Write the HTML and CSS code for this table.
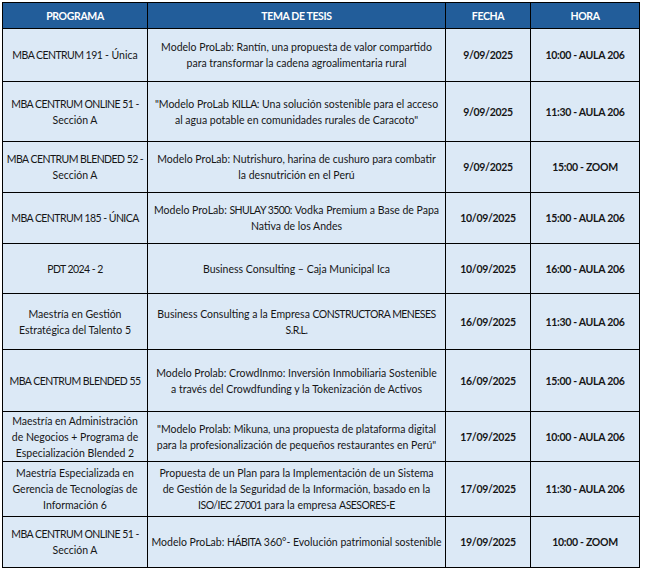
FILE: index.html
```html
<!DOCTYPE html>
<html lang="es">
<head>
<meta charset="utf-8">
<title>Sustentaciones de tesis</title>
<link rel="stylesheet" href="styles.css">
</head>
<body>
<div class="grid">
  <div class="cell head"><p>PROGRAMA</p></div>
  <div class="cell head"><p>TEMA DE TESIS</p></div>
  <div class="cell head"><p>FECHA</p></div>
  <div class="cell head"><p>HORA</p></div>

  <div class="cell"><p><span class="caps">MBA CENTRUM 191</span> - Única</p></div>
  <div class="cell"><p>Modelo ProLab: Rantín, una propuesta de valor compartido<br>para transformar la cadena agroalimentaria rural</p></div>
  <div class="cell b"><p>9/09/2025</p></div>
  <div class="cell b"><p>10:00 - AULA 206</p></div>

  <div class="cell"><p><span class="caps">MBA CENTRUM ONLINE 51 -</span><br>Sección A</p></div>
  <div class="cell"><p>"Modelo ProLab <span class="caps">KILLA</span>: Una solución sostenible para el acceso<br>al agua potable en comunidades rurales de Caracoto"</p></div>
  <div class="cell b"><p>9/09/2025</p></div>
  <div class="cell b"><p>11:30 - AULA 206</p></div>

  <div class="cell"><p><span class="caps">MBA CENTRUM BLENDED 52 -</span><br>Sección A</p></div>
  <div class="cell"><p>Modelo ProLab: Nutrishuro, harina de cushuro para combatir<br>la desnutrición en el Perú</p></div>
  <div class="cell b"><p>9/09/2025</p></div>
  <div class="cell b"><p>15:00 - ZOOM</p></div>

  <div class="cell"><p><span class="caps">MBA CENTRUM 185 - ÚNICA</span></p></div>
  <div class="cell"><p>Modelo ProLab: <span class="caps">SHULAY 3500</span>: Vodka Premium a Base de Papa<br>Nativa de los Andes</p></div>
  <div class="cell b"><p>10/09/2025</p></div>
  <div class="cell b"><p>15:00 - AULA 206</p></div>

  <div class="cell"><p><span class="caps">PDT 2024 - 2</span></p></div>
  <div class="cell"><p>Business Consulting – Caja Municipal Ica</p></div>
  <div class="cell b"><p>10/09/2025</p></div>
  <div class="cell b"><p>16:00 - AULA 206</p></div>

  <div class="cell"><p>Maestría en Gestión<br>Estratégica del Talento 5</p></div>
  <div class="cell"><p>Business Consulting a la Empresa <span class="caps">CONSTRUCTORA MENESES</span><br><span class="caps">S.R.L.</span></p></div>
  <div class="cell b"><p>16/09/2025</p></div>
  <div class="cell b"><p>11:30 - AULA 206</p></div>

  <div class="cell"><p><span class="caps">MBA CENTRUM BLENDED 55</span></p></div>
  <div class="cell"><p>Modelo Prolab: CrowdInmo: Inversión Inmobiliaria Sostenible<br>a través del Crowdfunding y la Tokenización de Activos</p></div>
  <div class="cell b"><p>16/09/2025</p></div>
  <div class="cell b"><p>15:00 - AULA 206</p></div>

  <div class="cell"><p>Maestría en Administración<br>de Negocios + Programa de<br>Especialización Blended 2</p></div>
  <div class="cell"><p>"Modelo Prolab: Mikuna, una propuesta de plataforma digital<br>para la profesionalización de pequeños restaurantes en Perú"</p></div>
  <div class="cell b"><p>17/09/2025</p></div>
  <div class="cell b"><p>10:00 - AULA 206</p></div>

  <div class="cell"><p>Maestría Especializada en<br>Gerencia de Tecnologías de<br>Información 6</p></div>
  <div class="cell"><p>Propuesta de un Plan para la Implementación de un Sistema<br>de Gestión de la Seguridad de la Información, basado en la<br><span class="caps">ISO/IEC 27001</span> para la empresa <span class="caps">ASESORES-E</span></p></div>
  <div class="cell b"><p>17/09/2025</p></div>
  <div class="cell b"><p>11:30 - AULA 206</p></div>

  <div class="cell"><p><span class="caps">MBA CENTRUM ONLINE 51 -</span><br>Sección A</p></div>
  <div class="cell"><p>Modelo ProLab: <span class="caps">HÁBITA</span> 360°- Evolución patrimonial sostenible</p></div>
  <div class="cell b"><p>19/09/2025</p></div>
  <div class="cell b"><p>10:00 - ZOOM</p></div>
</div>
</body>
</html>
```

FILE: styles.css
```css
html, body {
  margin: 0;
  padding: 0;
  background: #ffffff;
}

body {
  padding: 2px;
  font-family: "Lato", "Liberation Sans", sans-serif;
  font-size: 10.5px;
  color: #161616;
}

.grid {
  display: grid;
  grid-template-columns: 144px 297px 84px 108px;
  grid-template-rows: 25px 52px 59px 50px 50px 49px 55px 61px 49px 54px 50px;
  gap: 1px;
  padding: 1px;
  background: #000000;
  width: max-content;
}

.cell {
  background: #dce9f6;
  display: flex;
  align-items: center;
  justify-content: center;
  overflow: hidden;
}

.cell p {
  margin: 0;
  text-align: center;
  line-height: 16px;
  white-space: nowrap;
}

.caps {
  letter-spacing: -0.55px;
}

.head {
  background: #225d9a;
  color: #ffffff;
  font-weight: 700;
  letter-spacing: -0.35px;
}

.b {
  font-weight: 700;
  letter-spacing: -0.3px;
}
```
